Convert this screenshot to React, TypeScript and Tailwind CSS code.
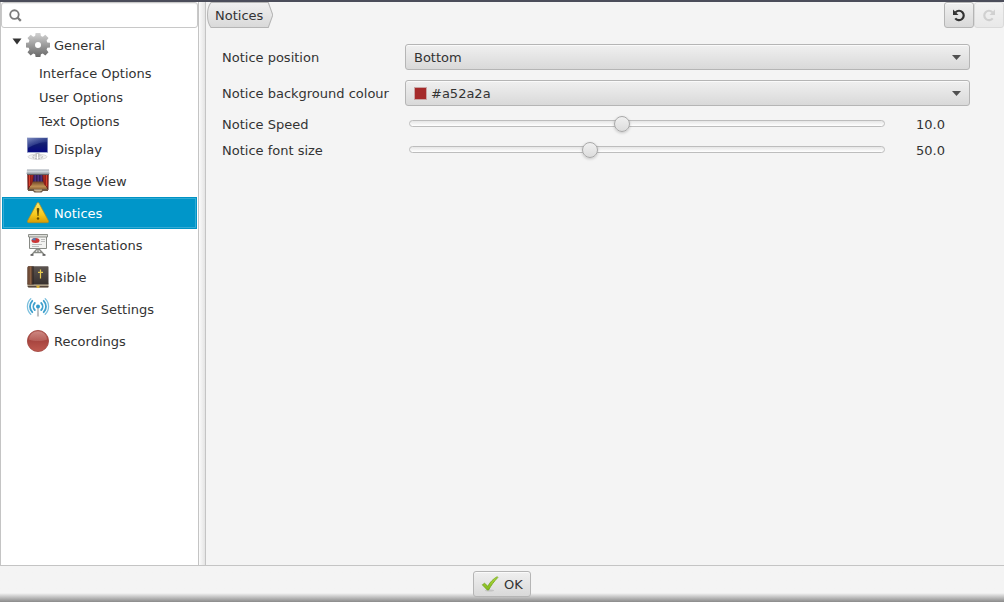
import { useState, type ReactNode } from "react";

const GearIcon = () => (
  <svg width="24" height="24" viewBox="0 0 24 24" aria-hidden="true">
    <defs>
      <linearGradient id="gear" x1="0" y1="0" x2="0" y2="1">
        <stop offset="0" stopColor="#d2d2d2" />
        <stop offset="0.500" stopColor="#9c9c9c" />
        <stop offset="1" stopColor="#686868" />
      </linearGradient>
    </defs>
    <path
      fill="url(#gear)"
      fillRule="evenodd"
      d="M9.600 0h4.800l.5 3 1.900.7 2.500-1.900 3.200 3.200-1.900 2.500.7 1.900 2.700.4v4.600l-2.700.4-.7 1.900 1.900 2.500-3.200 3.200-2.500-1.900-1.900.7-.5 2.800H9.600l-.5-2.800-1.900-.7-2.500 1.900-3.200-3.200 1.900-2.500-.7-1.900-2.700-.4V9.800l2.700-.4.7-1.900L1.500 5l3.200-3.200 2.500 1.900L9.100 3zM12 9a3 3 0 1 0 0 6a3 3 0 1 0 0-6z"
    />
  </svg>
);

const DisplayIcon = () => (
  <svg width="24" height="24" viewBox="0 0 24 24" aria-hidden="true">
    <defs>
      <linearGradient id="screen" x1="0" y1="0" x2="0" y2="1">
        <stop offset="0" stopColor="#26357f" />
        <stop offset="0.500" stopColor="#101b72" />
        <stop offset="1" stopColor="#080a80" />
      </linearGradient>
      <linearGradient id="glare" x1="0" y1="0" x2="1" y2="1">
        <stop offset="0" stopColor="#a5b2dc" stopOpacity="0.700" />
        <stop offset="0.700" stopColor="#5a6db5" stopOpacity="0.150" />
      </linearGradient>
    </defs>
    <ellipse cx="11.500" cy="19.800" rx="9.500" ry="2.600" fill="#f2f2f2" stroke="#d2d2d2" strokeWidth="0.800" />
    <ellipse cx="11.500" cy="19.800" rx="5" ry="2" fill="#e6e6e6" stroke="#aaa" strokeWidth="0.800" strokeDasharray="2 1" />
    <path d="M9.500 16h4v4.500h-4z" fill="#c4c4c4" />
    <path d="M11 17h1v5h-1z" fill="#fff" />
    <path d="M1 .5h21v15.500H1z" fill="#a4aed0" />
    <path d="M1.700 1h19.600v14H1.700z" fill="url(#screen)" />
    <path d="M1.700 1h19.600V5C14 5 8 8 1.700 11z" fill="url(#glare)" />
  </svg>
);

const StageIcon = () => (
  <svg width="24" height="24" viewBox="0 0 24 24" aria-hidden="true">
    <defs>
      <linearGradient id="boards" x1="0" y1="0" x2="0" y2="1">
        <stop offset="0" stopColor="#6d4426" />
        <stop offset="0.600" stopColor="#bf9054" />
        <stop offset="1" stopColor="#8a6239" />
      </linearGradient>
      <linearGradient id="canopy" x1="0" y1="0" x2="0" y2="1">
        <stop offset="0" stopColor="#9ba4ad" />
        <stop offset="0.400" stopColor="#d3d9de" />
        <stop offset="1" stopColor="#8b949c" />
      </linearGradient>
    </defs>
    <path d="M1.500 5h21v16h-21z" fill="#55241f" />
    <path d="M6 5h12v8H6z" fill="#2f2057" />
    <path d="M8.500 6H10v7H8.500zM11.500 6H13v7h-1.500zM14.500 6H16v7h-1.500z" fill="#4c3180" />
    <path d="M6 12.500h12l3.500 8h-19z" fill="url(#boards)" />
    <path d="M1.500 5.500h6c0 5-.5 7-2 10.500L2 19zM22.500 5.500h-6c0 5 .5 7 2 10.500L22 19z" fill="#8f1f1a" />
    <path d="M3 6h1v11H3zM20 6h1v11h-1z" fill="#d8432d" />
    <path d="M5.500 6h1l-1 8zM18.500 6h-1l1 8z" fill="#b83327" />
    <path d="M2 20h20v2h-5l-1.500 1.500h-7L7 22H2z" fill="#6e5844" />
    <path d="M8 20.500h8v1l-2 1h-4l-2-1z" fill="#cbb694" />
    <path d="M1 .5h22l.5 4.500H.5z" fill="url(#canopy)" />
    <path d="M1 5h22v1H1z" fill="#626166" />
  </svg>
);

const WarningIcon = () => (
  <svg width="24" height="24" viewBox="0 0 24 24" aria-hidden="true">
    <defs>
      <linearGradient id="warn" x1="0" y1="0" x2="0" y2="1">
        <stop offset="0" stopColor="#ffe66b" />
        <stop offset="0.600" stopColor="#f7c81c" />
        <stop offset="1" stopColor="#d79c05" />
      </linearGradient>
    </defs>
    <path d="M11 2.200c.5-.8 1.500-.8 2 0l9.400 17.500c.4 1 .1 2-.9 2H2.500c-1 0-1.300-1-.9-2z" fill="url(#warn)" stroke="#b98c12" strokeWidth="0.700" />
    <path d="M10.700 8c0-1.300 2.600-1.300 2.600 0l-.8 7h-1z" fill="#6b5000" />
    <circle cx="12" cy="17.500" r="1.200" fill="#6b5000" />
  </svg>
);

const PresentationIcon = () => (
  <svg width="24" height="24" viewBox="0 0 24 24" aria-hidden="true">
    <path d="M12 15v4M11 16l-5.500 6M13 16l5.500 6M8 19.500h8" stroke="#888a85" strokeWidth="1.400" fill="none" />
    <path d="M4.500 22h3M16.500 22h3" stroke="#555" strokeWidth="1.300" />
    <path d="M3.500 3.500h17v12h-17z" fill="#f2f2f0" stroke="#888a85" />
    <path d="M2.500 1.500h19v2.500h-19z" fill="#dcddd9" stroke="#777a75" strokeWidth="0.800" />
    <ellipse cx="9.500" cy="7.500" rx="4" ry="2.500" fill="#cc3434" />
    <path d="M9.500 7.500L5.700 7C6.300 5.600 8 5 9.500 5z" fill="#5179b5" />
    <path d="M15 6.500h4M15 8.500h4M6 11.500h10M6 13.500h7" stroke="#b5b5b5" strokeWidth="0.900" />
  </svg>
);

const BibleIcon = () => (
  <svg width="24" height="24" viewBox="0 0 24 24" aria-hidden="true">
    <defs>
      <linearGradient id="cover" x1="0" y1="0" x2="0" y2="1">
        <stop offset="0" stopColor="#5c5450" />
        <stop offset="1" stopColor="#37312f" />
      </linearGradient>
    </defs>
    <path d="M1.500 18h21v3.500c0 .6-.5 1-1 1H3c-1 0-1.500-1-1.500-2z" fill="#ccbea1" />
    <path d="M1.500 20.800h21v.9c0 .5-.4.900-1 .9H3c-.8 0-1.500-.8-1.500-1.800z" fill="#55463c" />
    <path d="M3 1.200h18.500c.7 0 1 .4 1 1V19.500h-21V2.700c0-1 .5-1.500 1.500-1.500z" fill="url(#cover)" />
    <path d="M3 1.200h3.500v18.300h-5V2.700c0-1 .5-1.500 1.500-1.500z" fill="#6d4a35" />
    <path d="M3.800 1.200h1v18.300h-1z" fill="#94694a" />
    <path d="M6.500 1.200h1v18.300h-1z" fill="#2b2320" />
    <path d="M14.500 4.500v9M12 7.300h5" stroke="#e7cb50" strokeWidth="1.200" />
    <path d="M10 20.500h4l-1 2.500h-2z" fill="#d7b23e" />
  </svg>
);

const ServerIcon = () => (
  <svg width="24" height="24" viewBox="0 0 24 24" aria-hidden="true">
    <path d="M11.300 10h1.400l.4 9.500h-2.200z" fill="#bcbfc1" />
    <circle cx="12" cy="9.500" r="2" fill="#359bcb" />
    <g fill="none" stroke="#3fa0cd" strokeWidth="1.800" strokeLinecap="round">
      <path d="M8.800 6a5 5 0 0 0 0 7M15.200 6a5 5 0 0 1 0 7" />
      <path d="M6.300 3.800a8.200 8.200 0 0 0 0 11.400M17.700 3.800a8.200 8.200 0 0 1 0 11.400" />
      <path d="M4.800 1.800a10.500 10.500 0 0 0 0 15.400M19.200 1.800a10.500 10.500 0 0 1 0 15.400" stroke="#7cc0de" strokeWidth="1.300" />
    </g>
  </svg>
);

const RecordIcon = () => (
  <svg width="24" height="24" viewBox="0 0 24 24" aria-hidden="true">
    <defs>
      <linearGradient id="rec" x1="0" y1="0" x2="0" y2="1">
        <stop offset="0" stopColor="#b0564f" />
        <stop offset="0.500" stopColor="#a8453f" />
        <stop offset="1" stopColor="#bf5a50" />
      </linearGradient>
      <linearGradient id="shine" x1="0" y1="0" x2="0" y2="1">
        <stop offset="0" stopColor="#d99c97" stopOpacity="0.700" />
        <stop offset="1" stopColor="#cf8a84" stopOpacity="0.350" />
      </linearGradient>
    </defs>
    <circle cx="12" cy="12" r="10.600" fill="url(#rec)" stroke="#a04640" strokeWidth="0.800" />
    <path d="M3 10.500C3.500 5 7.500 2.200 12 2.200s8.500 2.800 9 8.300c-5 2-13 2-18 0z" fill="url(#shine)" />
  </svg>
);

const UndoIcon = () => (
  <svg width="14" height="14" viewBox="0 0 14 14" aria-hidden="true">
    <path d="M3.600 4.200A4.700 4.700 0 1 1 3.300 10.300" fill="none" stroke="currentColor" strokeWidth="2.200" />
    <path d="M1 1.500v5.500h5.500z" fill="currentColor" />
  </svg>
);

const CheckIcon = () => (
  <svg width="18" height="18" viewBox="0 0 18 18" aria-hidden="true">
    <defs>
      <linearGradient id="tick" x1="0" y1="0" x2="0" y2="1">
        <stop offset="0" stopColor="#b4dc3a" />
        <stop offset="1" stopColor="#80b81c" />
      </linearGradient>
    </defs>
    <ellipse cx="8.500" cy="15.500" rx="4.500" ry="1" fill="#c4c4c4" />
    <path d="M1.300 9.800l2.300-1.500 3.200 3C9 7 12.500 3.600 16.300 1.700l.5.800C13 6.500 10 10.500 7.600 15H6.300z" fill="url(#tick)" stroke="#6da31a" strokeWidth="0.800" />
  </svg>
);

type Item = { label: string; icon: ReactNode; children?: string[] };

const items: Item[] = [
  { label: "General", icon: <GearIcon />, children: ["Interface Options", "User Options", "Text Options"] },
  { label: "Display", icon: <DisplayIcon /> },
  { label: "Stage View", icon: <StageIcon /> },
  { label: "Notices", icon: <WarningIcon /> },
  { label: "Presentations", icon: <PresentationIcon /> },
  { label: "Bible", icon: <BibleIcon /> },
  { label: "Server Settings", icon: <ServerIcon /> },
  { label: "Recordings", icon: <RecordIcon /> },
];

const raised = "border border-[#b5b5b5] bg-linear-to-b from-[#f0f0f0] to-[#d9d9d9] shadow-[inset_0_1px_0_#fafafa]";

function Sidebar() {
  const [open, setOpen] = useState(true);
  const [selected, setSelected] = useState("Notices");
  return (
    <aside className="flex w-[199px] shrink-0 flex-col border-x border-[#c4c4c4] bg-white">
      <label className="flex h-[26px] items-center rounded-[3px] border border-[#c8c8c8] bg-white px-[7px] shadow-[inset_0_1px_1px_#eee]">
        <svg width="14" height="14" viewBox="0 0 14 14" fill="none" stroke="#7b7b7b" strokeWidth="2" aria-hidden="true">
          <circle cx="6" cy="6.500" r="4.700" />
          <path d="M9.300 9.800l3.700 3.700" strokeWidth="2.500" />
        </svg>
        <input type="search" aria-label="Search settings" className="ml-1 w-full min-w-0 bg-transparent outline-none" />
      </label>
      <nav aria-label="Settings" className="pt-px">
        <ul>
          {items.map((item) => (
            <li key={item.label}>
              <div
                className={
                  item.label === selected
                    ? "mx-px flex h-8 items-center bg-[#0096c9] text-white shadow-[inset_0_0_0_1px_#0093c5,inset_0_0_0_2px_#32abd4]"
                    : "mx-px flex h-8 items-center"
                }
              >
                <div className="flex h-full w-6 shrink-0 justify-center pt-[9px]">
                  {item.children && (
                    <button type="button" aria-label="Toggle General" aria-expanded={open} onClick={() => setOpen(!open)} className="flex h-2 items-start pl-[6px]">
                      <svg width="10" height="7" viewBox="0 0 10 7" aria-hidden="true">
                        <path d="M.5.500h9L5 6.500z" fill="#333" />
                      </svg>
                    </button>
                  )}
                </div>
                <button type="button" onClick={() => setSelected(item.label)} className="flex h-full flex-1 items-center gap-1 text-left">
                  {item.icon}
                  <span>{item.label}</span>
                </button>
              </div>
              {item.children && open && (
                <ul>
                  {item.children.map((child) => (
                    <li key={child} className="h-6">
                      <button type="button" className="h-full w-full pl-[38px] text-left">
                        {child}
                      </button>
                    </li>
                  ))}
                </ul>
              )}
            </li>
          ))}
        </ul>
      </nav>
    </aside>
  );
}

function Combo({ id, options, swatch }: { id: string; options: string[]; swatch?: boolean }) {
  return (
    <div className="relative col-span-2">
      <select
        id={id}
        className={`${raised} block h-[26px] w-full appearance-none rounded-[3px] pr-8 outline-none ${swatch ? "pl-[25px]" : "pl-2"}`}
      >
        {options.map((o) => (
          <option key={o}>{o}</option>
        ))}
      </select>
      {swatch && <span className="pointer-events-none absolute top-[7px] left-[9px] size-[13px] border border-[#c9a5a5] bg-[#a52a2a]" />}
      <svg className="pointer-events-none absolute top-[11px] right-[9px]" width="9" height="5" viewBox="0 0 9 5" aria-hidden="true">
        <path d="M0 0h9L4.500 5z" fill="#505050" />
      </svg>
    </div>
  );
}

function Slider({ id, min, max, initial }: { id: string; min: number; max: number; initial: number }) {
  const [value, setValue] = useState(initial);
  return (
    <>
      <div className="flex h-[26px] items-center px-1 pb-[2px]">
        <input
          id={id}
          type="range"
          min={min}
          max={max}
          step={0.1}
          value={value}
          onChange={(e) => setValue(Number(e.target.value))}
          className="h-4 w-full appearance-none bg-transparent outline-none [&::-webkit-slider-runnable-track]:h-[7px] [&::-webkit-slider-runnable-track]:rounded-full [&::-webkit-slider-runnable-track]:border [&::-webkit-slider-runnable-track]:border-[#bdbdbd] [&::-webkit-slider-runnable-track]:bg-linear-to-b [&::-webkit-slider-runnable-track]:from-[#e6e6e6] [&::-webkit-slider-runnable-track]:to-white [&::-webkit-slider-thumb]:-mt-[5px] [&::-webkit-slider-thumb]:size-4 [&::-webkit-slider-thumb]:appearance-none [&::-webkit-slider-thumb]:rounded-full [&::-webkit-slider-thumb]:border [&::-webkit-slider-thumb]:border-[#a8a8a8] [&::-webkit-slider-thumb]:bg-linear-to-b [&::-webkit-slider-thumb]:from-[#f0f0f0] [&::-webkit-slider-thumb]:to-[#dcdcdc] [&::-webkit-slider-thumb]:shadow-[0_1px_3px_#0003]"
        />
      </div>
      <output htmlFor={id} className="pl-[27px]">
        {value.toFixed(1)}
      </output>
    </>
  );
}

export default function App() {
  return (
    <div className="flex min-h-screen flex-col border-t-2 border-[#4b4d5a] bg-[#f4f4f4] font-['DejaVu_Sans',sans-serif] text-[13px] leading-[17px] text-[#333]">
      <div className="flex flex-1">
        <Sidebar />
        <div className="w-[7px] shrink-0 border-r border-[#c4c4c4] bg-linear-to-r from-[#fbfbfb] to-[#e4e4e4]" />
        <main className="min-w-0 flex-1">
          <header className="flex items-start justify-between pl-px">
            <a href="#notices" className="relative flex h-[26px] items-center pr-[10px] pl-2">
              <svg className="absolute inset-0 h-full w-full" viewBox="0 0 66 26" preserveAspectRatio="none" aria-hidden="true">
                <defs>
                  <linearGradient id="crumb" x1="0" y1="0" x2="0" y2="1">
                    <stop offset="0" stopColor="#f0f0f0" />
                    <stop offset="1" stopColor="#d9d9d9" />
                  </linearGradient>
                </defs>
                <path d="M4 .5h57l4.500 12.500L61 25.500H4C2 23 .5 18 .5 13S2 3 4 .5z" fill="url(#crumb)" stroke="#b5b5b5" />
              </svg>
              <span className="relative">Notices</span>
            </a>
            <div className="flex">
              <button type="button" aria-label="Undo" className={`${raised} flex h-[26px] w-[30px] items-center justify-center rounded-[3px]`}>
                <UndoIcon />
              </button>
              <button type="button" aria-label="Redo" disabled className={`${raised} flex h-[26px] w-[30px] items-center justify-center rounded-[3px] opacity-40`}>
                <span className="-scale-x-100 opacity-40">
                  <UndoIcon />
                </span>
              </button>
            </div>
          </header>
          <form className="grid grid-cols-[183px_minmax(0,1fr)_81px] items-center pt-4 pr-[34px] pl-4">
            <label htmlFor="position">Notice position</label>
            <Combo id="position" options={["Bottom", "Top"]} />
            <div className="col-span-3 h-[10px]" />
            <label htmlFor="colour">Notice background colour</label>
            <Combo id="colour" options={["#a52a2a"]} swatch />
            <div className="col-span-3 h-[5px]" />
            <label htmlFor="speed">Notice Speed</label>
            <Slider id="speed" min={2} max={20} initial={10} />
            <label htmlFor="size">Notice font size</label>
            <Slider id="size" min={20} max={100} initial={50} />
          </form>
        </main>
      </div>
      <footer className="flex justify-center border-t border-[#c4c4c4] bg-linear-to-t from-[#8a8a8a] to-[#f4f4f4] to-[9px] py-[5px]">
        <button type="button" className={`${raised} flex h-[26px] items-center gap-[5px] rounded-[3px] px-[7px]`}>
          <CheckIcon />
          OK
        </button>
      </footer>
    </div>
  );
}
